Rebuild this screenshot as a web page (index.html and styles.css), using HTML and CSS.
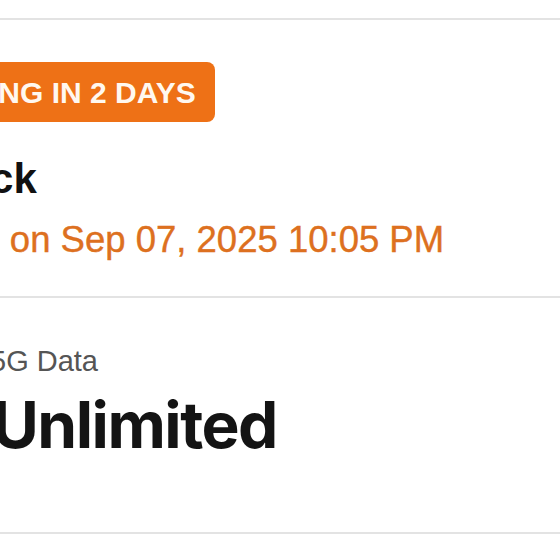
FILE: index.html
```html
<!DOCTYPE html>
<html lang="en">
<head>
<meta charset="utf-8">
<title>Plan</title>
<link rel="stylesheet" href="styles.css">
</head>
<body>
<div class="screen">
  <div class="divider"></div>
  <section class="plan">
    <span class="badge">EXPIRING IN 2 DAYS</span>
    <h2 class="plan-name">5G Pack</h2>
    <p class="expiry">Expires on Sep 07, 2025 10:05 PM</p>
  </section>
  <div class="divider"></div>
  <section class="allowance">
    <p class="label">5G Data</p>
    <p class="value">Unlimited</p>
  </section>
  <div class="divider"></div>
</div>
</body>
</html>
```
FILE: styles.css
```css
html, body {
  margin: 0;
  padding: 0;
  background: #ffffff;
}
body {
  font-family: "Liberation Sans", Arial, sans-serif;
  overflow: hidden;
}
.screen {
  width: 560px;
  height: 560px;
  overflow: hidden;
  padding-top: 18px;
  box-sizing: border-box;
}
.divider {
  height: 2px;
  background: #e3e3e3;
}
.plan {
  margin-left: -122px;
  padding: 42px 0 34px;
  display: flex;
  flex-direction: column;
  align-items: flex-start;
}
.badge {
  margin-left: 3px;
  height: 60px;
  line-height: 61px;
  padding: 0 19px;
  background: #ee7116;
  color: #fff8f0;
  font-size: 30px;
  font-weight: 700;
  border-radius: 8px;
  white-space: nowrap;
}
.plan-name {
  margin: 33px 0 0 -7px;
  font-size: 42px;
  line-height: 48px;
  font-weight: 700;
  color: #111111;
  white-space: nowrap;
}
.expiry {
  margin: 15px 0 0;
  font-size: 36.5px;
  line-height: 44px;
  color: #dd7020;
  white-space: nowrap;
  -webkit-text-stroke: 0.4px #dd7020;
}
.allowance {
  margin-left: -10px;
  padding: 46px 0 71px;
}
.label {
  margin: 0;
  font-size: 29px;
  line-height: 34px;
  color: #555555;
  white-space: nowrap;
}
.value {
  margin: 11px 0 0 2px;
  font-family: Inter, "Liberation Sans", sans-serif;
  font-size: 64px;
  line-height: 72px;
  font-weight: 700;
  letter-spacing: -1.5px;
  color: #141414;
  white-space: nowrap;
}
```
